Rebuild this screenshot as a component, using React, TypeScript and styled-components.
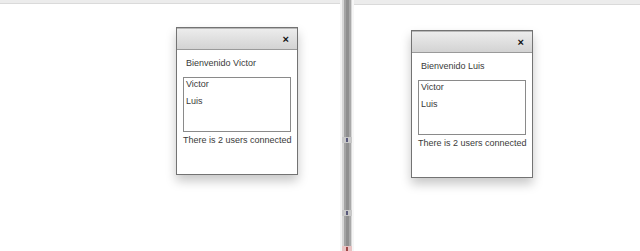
import React from "react";
import styled, { createGlobalStyle } from "styled-components";

const Global = createGlobalStyle`
  html, body { margin: 0; padding: 0; background: #fff; }
  body { font-family: "Liberation Sans", Arial, sans-serif; }
`;

const Page = styled.div`
  display: flex;
  width: 640px;
  height: 251px;
  overflow: hidden;
`;

const Pane = styled.div<{ $w: number }>`
  width: ${(p) => p.$w}px;
  flex: none;
  display: flex;
  flex-direction: column;
`;

const TopStrip = styled.div<{ $h: number }>`
  height: ${(p) => p.$h}px;
  background: #ececec;
  border-bottom: 1px solid #dadada;
  flex: none;
`;

const Stage = styled.div<{ $left: number; $top: number }>`
  padding-left: ${(p) => p.$left}px;
  padding-top: ${(p) => p.$top}px;
`;

const Divider = styled.div`
  width: 14px;
  flex: none;
  position: relative;
  background: linear-gradient(
    to right,
    #f4f4f4 0px,
    #f4f4f4 2px,
    #d6d6d6 2px,
    #d6d6d6 4px,
    #a4a4a4 4px,
    #a4a4a4 6px,
    #8f8f8f 6px,
    #8f8f8f 9px,
    #a9a9a9 9px,
    #a9a9a9 11px,
    #d8d8d8 11px,
    #d8d8d8 12px,
    #f6f6f6 12px
  );
`;

const Grip = styled.div<{ $y: number; $red?: boolean }>`
  position: absolute;
  left: 2px;
  top: ${(p) => p.$y}px;
  width: 10px;
  height: 6px;
  background: ${(p) => (p.$red ? "#e8c4c4" : "#c8c8c8")};
  &::after {
    content: "";
    position: absolute;
    left: 4px;
    top: 1px;
    width: 2px;
    height: 4px;
    background: ${(p) => (p.$red ? "#a04848" : "#5a5a7a")};
  }
`;

const Dialog = styled.div`
  width: 120px;
  border: 1px solid #737373;
  background: #fff;
  box-shadow: 0 6px 10px rgba(0, 0, 0, 0.22);
  color: #3a3a3a;
  font-size: 9px;
`;

const Header = styled.div`
  height: 22px;
  border-bottom: 1px solid #9a9a9a;
  border-top: 1px solid #b8b8b8;
  box-sizing: border-box;
  background: linear-gradient(to bottom, #ececec, #d3d3d3);
  display: flex;
  align-items: center;
  justify-content: flex-end;
  padding-right: 8px;
`;

const Close = styled.span`
  font-size: 11px;
  font-weight: bold;
  color: #111;
  line-height: 1;
`;

const Body = styled.div`
  padding: 8px 6px 28px 6px;
`;

const Title = styled.div`
  line-height: 11px;
  padding-left: 3px;
  margin-bottom: 8px;
`;

const UserList = styled.div`
  height: 55px;
  box-sizing: border-box;
  border: 1px solid #8a8a8a;
  padding: 1px 2px;
`;

const UserItem = styled.div`
  line-height: 11px;
  height: 17px;
`;

const Status = styled.div`
  line-height: 11px;
  margin-top: 3px;
  white-space: nowrap;
`;

function ChatDialog({ me, users }: { me: string; users: string[] }) {
  return (
    <Dialog>
      <Header>
        <Close>×</Close>
      </Header>
      <Body>
        <Title>Bienvenido {me}</Title>
        <UserList>
          {users.map((u) => (
            <UserItem key={u}>{u}</UserItem>
          ))}
        </UserList>
        <Status>There is {users.length} users connected</Status>
      </Body>
    </Dialog>
  );
}

export default function App() {
  const users = ["Victor", "Luis"];
  return (
    <>
      <Global />
      <Page>
        <Pane $w={340}>
          <TopStrip $h={3} />
          <Stage $left={176} $top={23}>
            <ChatDialog me="Victor" users={users} />
          </Stage>
        </Pane>
        <Divider>
          <Grip $y={137} />
          <Grip $y={210} />
          <Grip $y={246} $red />
        </Divider>
        <Pane $w={286}>
          <TopStrip $h={4} />
          <Stage $left={57} $top={25}>
            <ChatDialog me="Luis" users={users} />
          </Stage>
        </Pane>
      </Page>
    </>
  );
}
